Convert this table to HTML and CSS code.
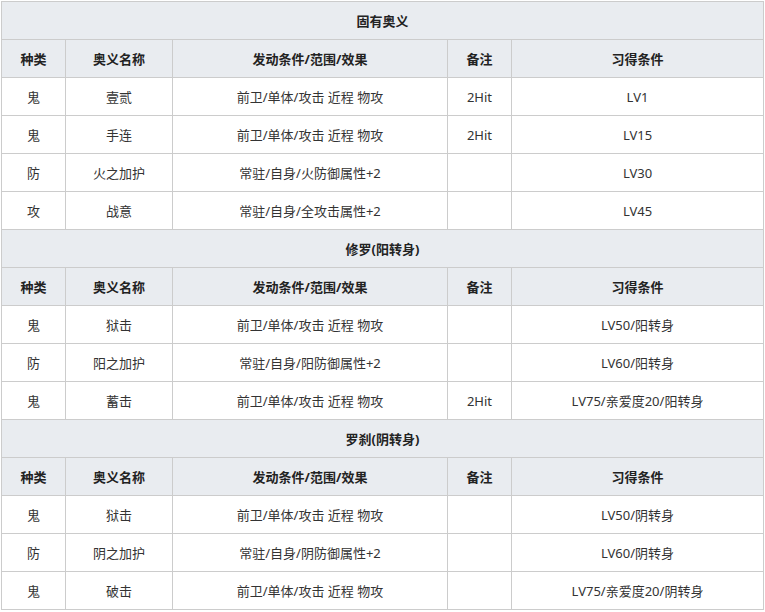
FILE: index.html
```html
<!DOCTYPE html>
<html lang="zh">
<head>
<meta charset="utf-8">
<link rel="stylesheet" href="styles.css">
</head>
<body>
<table class="skills">
<colgroup>
<col class="c1"><col class="c2"><col class="c3"><col class="c4"><col class="c5">
</colgroup>
<tbody>
<tr class="title"><th colspan="5">固有奥义</th></tr>
<tr class="head"><th>种类</th><th>奥义名称</th><th>发动条件/范围/效果</th><th>备注</th><th>习得条件</th></tr>
<tr><td>鬼</td><td>壹贰</td><td>前卫/单体/攻击 近程 物攻</td><td>2Hit</td><td>LV1</td></tr>
<tr><td>鬼</td><td>手连</td><td>前卫/单体/攻击 近程 物攻</td><td>2Hit</td><td>LV15</td></tr>
<tr><td>防</td><td>火之加护</td><td>常驻/自身/火防御属性+2</td><td></td><td>LV30</td></tr>
<tr><td>攻</td><td>战意</td><td>常驻/自身/全攻击属性+2</td><td></td><td>LV45</td></tr>
<tr class="title"><th colspan="5">修罗(阳转身)</th></tr>
<tr class="head"><th>种类</th><th>奥义名称</th><th>发动条件/范围/效果</th><th>备注</th><th>习得条件</th></tr>
<tr><td>鬼</td><td>狱击</td><td>前卫/单体/攻击 近程 物攻</td><td></td><td>LV50/阳转身</td></tr>
<tr><td>防</td><td>阳之加护</td><td>常驻/自身/阳防御属性+2</td><td></td><td>LV60/阳转身</td></tr>
<tr><td>鬼</td><td>蓄击</td><td>前卫/单体/攻击 近程 物攻</td><td>2Hit</td><td>LV75/亲爱度20/阳转身</td></tr>
<tr class="title"><th colspan="5">罗刹(阴转身)</th></tr>
<tr class="head"><th>种类</th><th>奥义名称</th><th>发动条件/范围/效果</th><th>备注</th><th>习得条件</th></tr>
<tr><td>鬼</td><td>狱击</td><td>前卫/单体/攻击 近程 物攻</td><td></td><td>LV50/阴转身</td></tr>
<tr><td>防</td><td>阴之加护</td><td>常驻/自身/阴防御属性+2</td><td></td><td>LV60/阴转身</td></tr>
<tr><td>鬼</td><td>破击</td><td>前卫/单体/攻击 近程 物攻</td><td></td><td>LV75/亲爱度20/阴转身</td></tr>
</tbody>
</table>
</body>
</html>
```

FILE: styles.css
```css
html, body {
  margin: 0;
  padding: 0;
  background: #ffffff;
}
body {
  padding: 1px 0 0 1px;
  font-family: "Noto Sans", "Noto Sans CJK SC", sans-serif;
  font-size: 13px;
  color: #333333;
}
.skills {
  border-collapse: collapse;
  table-layout: fixed;
  width: 763px;
}
.c1 { width: 64px; }
.c2 { width: 107px; }
.c3 { width: 275px; }
.c4 { width: 64px; }
.c5 { width: 252px; }
.skills th,
.skills td {
  border: 1px solid #cccccc;
  height: 38px;
  padding: 0 4px;
  text-align: center;
  vertical-align: middle;
  line-height: 18px;
  white-space: nowrap;
  box-sizing: border-box;
}
.skills th {
  background: #e9ecf0;
  font-weight: bold;
  color: #222222;
}
.skills td {
  font-weight: normal;
}
```
